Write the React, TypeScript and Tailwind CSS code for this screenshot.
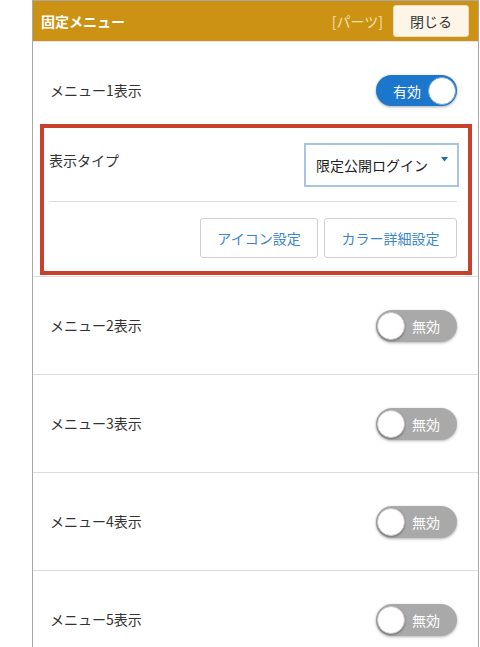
import React from "react";

const font = { fontFamily: '"Noto Sans CJK JP", "Noto Sans", sans-serif' };

function Toggle({ on }: { on: boolean }) {
  if (on) {
    return (
      <div className="relative flex h-[31px] w-[81px] items-center rounded-full bg-[#1b77cb] shadow-[0_1px_3px_rgba(0,0,0,0.35)]">
        <span className="ml-[17px] text-[14px] leading-none text-white">有効</span>
        <span className="absolute right-[1px] top-[1.5px] h-[28px] w-[28px] rounded-full border border-[#7fa6d2] bg-white" />
      </div>
    );
  }
  return (
    <div className="relative flex h-[32px] w-[81px] items-center rounded-full bg-[#a9a9a9] shadow-[0_1px_3px_rgba(0,0,0,0.3)]">
      <span className="absolute left-[1px] top-[2px] h-[28px] w-[28px] rounded-full border border-[#c8c8c8] bg-white shadow-[0_1px_2px_rgba(0,0,0,0.35)]" />
      <span className="ml-[36px] text-[14px] leading-none text-white">無効</span>
    </div>
  );
}

function Row({ n }: { n: number }) {
  return (
    <div className="flex h-[98px] items-center justify-between border-t border-[#dcdcdc] pl-[17px] pr-[21px]">
      <span className="text-[14px] text-[#333]">メニュー{n}表示</span>
      <Toggle on={false} />
    </div>
  );
}

export default function App() {
  return (
    <div className="h-[647px] w-[480px] overflow-hidden bg-white" style={font}>
      <div className="ml-[32px] w-[447px] border-x border-t border-[#a9a9a9]">
        <div className="flex h-[40px] items-center bg-[#cc9214] pl-[8px] pr-[9px]">
          <span className="text-[14px] font-bold text-white">固定メニュー</span>
          <span className="ml-auto text-[14px] text-[#f5e0ae]">[パーツ]</span>
          <button className="ml-[10px] flex h-[32px] w-[76px] items-center justify-center rounded-[3px] border border-[#e9dcc2] bg-[#fcf5e8] text-[14px] text-[#333]">
            閉じる
          </button>
        </div>
        <div className="h-[1px] bg-[#e6e4f0]" />
        <div className="flex flex-col">
          <div className="mt-[33px] flex items-center justify-between pl-[17px] pr-[21px]">
            <span className="text-[14px] text-[#333]">メニュー1表示</span>
            <Toggle on={true} />
          </div>
          <div className="ml-[7px] mr-[6px] mt-[18px] border-4 border-[#c8412b] pb-[13px] pl-[5px] pr-[11px] pt-[15px]">
            <div className="flex items-start justify-between">
              <span className="mt-[7px] text-[14px] text-[#333]">表示タイプ</span>
              <div className="mr-[-2px] flex h-[44px] w-[155px] items-start justify-between border-2 border-[#a6c4e4] bg-white pl-[10px] pr-[9px]">
                <span className="mt-[10px] text-[14px] leading-[20px] text-[#222]">限定公開ログイン</span>
                <svg width="7" height="5" viewBox="0 0 7 5" className="mt-[12px]">
                  <path d="M0 0 L7 0 L3.5 4.5 Z" fill="#1a6fc0" />
                </svg>
              </div>
            </div>
            <div className="mt-[14px] h-[1px] bg-[#dcdcdc]" />
            <div className="mt-[16px] flex justify-end gap-[6px]">
              <button className="flex h-[40px] w-[118px] items-center justify-center rounded-[3px] border border-[#cfcfcf] bg-white text-[14px] text-[#3a86cc]">
                アイコン設定
              </button>
              <button className="flex h-[40px] w-[133px] items-center justify-center rounded-[3px] border border-[#cfcfcf] bg-white text-[14px] text-[#3a86cc]">
                カラー詳細設定
              </button>
            </div>
          </div>
          <div className="h-[1px]" />
          <Row n={2} />
          <Row n={3} />
          <Row n={4} />
          <Row n={5} />
        </div>
      </div>
    </div>
  );
}
